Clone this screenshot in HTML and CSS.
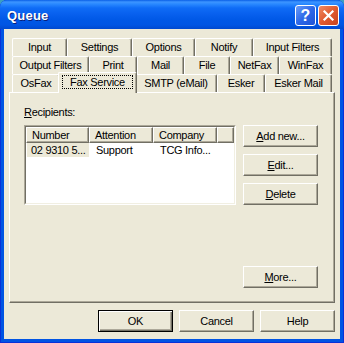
FILE: index.html
```html
<!DOCTYPE html>
<html lang="en">
<head>
  <meta charset="UTF-8">
  <title>Queue</title>
  <link rel="stylesheet" href="styles.css">
</head>
<body>
  <div class="window">
    <div class="titlebar">
      <span class="title">Queue</span>
      <div class="caption-buttons">
        <div class="caption-btn help">?</div>
        <div class="caption-btn close">
          <svg width="19" height="19" viewBox="0 0 19 19">
            <path d="M5.5 5.5 L13.5 13.5 M13.5 5.5 L5.5 13.5" stroke="#fff" stroke-width="2.2" stroke-linecap="square"/>
          </svg>
        </div>
      </div>
    </div>

    <div class="client">
      <div class="tabs">
        <div class="tab-row row1">
          <div class="tab">Input</div>
          <div class="tab">Settings</div>
          <div class="tab">Options</div>
          <div class="tab">Notify</div>
          <div class="tab">Input Filters</div>
        </div>
        <div class="tab-row row2">
          <div class="tab">Output Filters</div>
          <div class="tab">Print</div>
          <div class="tab">Mail</div>
          <div class="tab">File</div>
          <div class="tab">NetFax</div>
          <div class="tab">WinFax</div>
        </div>
        <div class="tab-row row3">
          <div class="tab">OsFax</div>
          <div class="tab active"><span class="focus">Fax Service</span></div>
          <div class="tab">SMTP (eMail)</div>
          <div class="tab">Esker</div>
          <div class="tab">Esker Mail</div>
        </div>
      </div>

      <div class="panel">
        <div class="label"><u>R</u>ecipients:</div>
        <div class="recipients">
          <div class="listview">
            <div class="list-inner">
              <div class="list-header">
                <div>Number</div>
                <div>Attention</div>
                <div>Company</div>
                <div></div>
              </div>
              <div class="list-row">
                <div><span class="selected">02 9310 5...</span></div>
                <div>Support</div>
                <div>TCG Info...</div>
              </div>
            </div>
          </div>
          <div class="side-buttons">
            <button class="btn"><u>A</u>dd new...</button>
            <button class="btn"><u>E</u>dit...</button>
            <button class="btn"><u>D</u>elete</button>
          </div>
        </div>
        <button class="btn more"><u>M</u>ore...</button>
      </div>

      <div class="footer">
        <button class="btn default">OK</button>
        <button class="btn">Cancel</button>
        <button class="btn">Help</button>
      </div>
    </div>
  </div>
</body>
</html>
```

FILE: styles.css
```css
body {
  margin: 0;
  background: #3c9fc0;
  font-family: "Liberation Sans", Arial, sans-serif;
  font-size: 11px;
  letter-spacing: -0.3px;
  color: #000;
}

.window {
  width: 344px;
  height: 343px;
  box-sizing: border-box;
  display: flex;
  flex-direction: column;
  border-radius: 7px 7px 0 0;
  overflow: hidden;
  background: #0054e3;
  box-shadow: inset 1px 0 #0831d9, inset -1px 0 #0831d9, inset 0 -1px #0831d9;
}

/* title bar */
.titlebar {
  flex: none;
  height: 29px;
  box-sizing: border-box;
  display: flex;
  justify-content: space-between;
  align-items: flex-start;
  padding: 0 5px 0 7px;
  background: linear-gradient(to bottom, #0a5fe6 0, #3d95ff 2px, #2a89ff 4px, #0f6cf6 8px, #0860ee 14px, #0058e6 20px, #0055e3 25px, #0049cf 29px);
}

.title {
  margin-top: 8px;
  line-height: 15px;
  font-size: 13px;
  font-weight: bold;
  letter-spacing: 0.2px;
  color: #fff;
  text-shadow: 1px 1px #0a1f7a;
}

.caption-buttons {
  display: flex;
  gap: 2px;
  margin-top: 5px;
}

.caption-btn {
  width: 21px;
  height: 21px;
  box-sizing: border-box;
  border: 1px solid #fff;
  border-radius: 3px;
  display: flex;
  align-items: center;
  justify-content: center;
}

.help {
  background: linear-gradient(135deg, #6a9cf8, #2d68e8 50%, #1d52d6);
  color: #fff;
  font-weight: bold;
  font-size: 16px;
  letter-spacing: 0;
}

.close {
  background: linear-gradient(135deg, #f08a63, #e05a30 50%, #c8421c);
}

/* dialog body */
.client {
  flex: 1;
  display: flex;
  flex-direction: column;
  margin: 0 4px 4px;
  background: #ece9d8;
}

.tabs {
  padding: 9px 0 0 8px;
}

.tab-row {
  display: grid;
  height: 18px;
}

.row1 { grid-template-columns: 55px 65px 63px 58px 79px; }
.row2 { grid-template-columns: 77px 48px 47px 46px 49px 53px; }
.row3 { grid-template-columns: 48px 75px 82px 48px 67px; }

.tab {
  box-sizing: border-box;
  padding-top: 2px;
  line-height: 13px;
  text-align: center;
  white-space: nowrap;
  border-top: 1px solid #fff;
  border-left: 1px solid #fff;
  border-right: 1px solid #716f64;
  border-radius: 2px 2px 0 0;
  box-shadow: inset -1px 0 #aca899;
}

.tab.active {
  position: relative;
  z-index: 1;
  margin: -2px -2px -1px;
  padding-top: 0;
  background: #ece9d8;
}

.focus {
  display: block;
  margin: 2px 3px 0;
  border: 1px dotted #000;
  line-height: 12px;
}

.panel {
  flex: 1;
  display: flex;
  flex-direction: column;
  margin: 0 5px;
  padding: 13px 16px 14px 14px;
  border-top: 1px solid #fff;
  border-left: 1px solid #fff;
  border-right: 1px solid #716f64;
  border-bottom: 1px solid #716f64;
  box-shadow: inset -1px -1px #aca899;
}

.label {
  line-height: 13px;
  margin-bottom: 6px;
}

.recipients {
  display: flex;
  gap: 7px;
}

.listview {
  width: 212px;
  height: 80px;
  box-sizing: border-box;
  border: 1px solid;
  border-color: #aca899 #fff #fff #aca899;
  background: #fff;
}

.list-inner {
  height: 100%;
  box-sizing: border-box;
  border: 1px solid;
  border-color: #716f64 #f1efe2 #f1efe2 #716f64;
}

.list-header,
.list-row {
  display: grid;
  grid-template-columns: 63px 64px 64px 1fr;
}

.list-header div {
  height: 16px;
  box-sizing: border-box;
  padding: 1px 0 0 5px;
  line-height: 13px;
  white-space: nowrap;
  border-top: 1px solid #fff;
  border-left: 1px solid #fff;
  border-right: 1px solid #716f64;
  border-bottom: 1px solid #716f64;
  box-shadow: inset -1px -1px #aca899;
  background: #ece9d8;
}

.list-row div {
  line-height: 14px;
  padding-left: 7px;
  white-space: nowrap;
}

.list-row div:first-child {
  padding-left: 1px;
}

.selected {
  display: block;
  padding-left: 4px;
  background: #ece9d8;
}

.side-buttons {
  display: flex;
  flex-direction: column;
  gap: 7px;
}

.btn {
  width: 75px;
  height: 22px;
  box-sizing: border-box;
  padding: 0;
  border: 1px solid;
  border-color: #fff #716f64 #716f64 #fff;
  box-shadow: inset -1px -1px #aca899;
  background: #ece9d8;
  font: inherit;
  letter-spacing: inherit;
  color: #000;
}

.more {
  margin-top: auto;
  align-self: flex-end;
}

.btn.default {
  border: 1px solid #000;
  box-shadow: inset 1px 1px #fff, inset -1px -1px #716f64, inset -2px -2px #aca899;
}

.footer {
  display: flex;
  justify-content: flex-end;
  gap: 6px;
  padding: 7px 5px 7px 0;
}
```
